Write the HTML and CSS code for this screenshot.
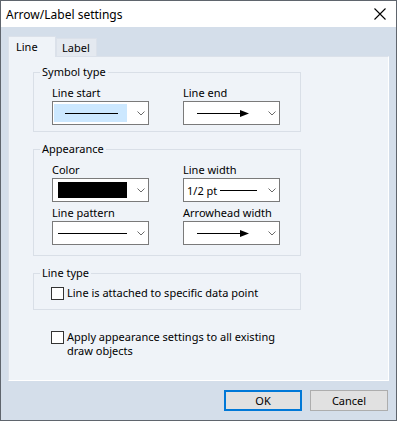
FILE: index.html
```html
<!DOCTYPE html>
<html lang="en">

<head>
	<meta charset="utf-8">
	<title>Arrow/Label settings</title>
	<link rel="stylesheet" href="styles.css">
</head>

<body>
	<div class="dialog">
		<div class="titlebar">
			<span class="title">Arrow/Label settings</span>
			<svg class="close" width="12" height="12" viewBox="0 0 12 12">
				<path d="M0.5 0.5 L11.5 11.5 M11.5 0.5 L0.5 11.5" stroke="#000" stroke-width="1.1" fill="none" />
			</svg>
		</div>

		<div class="main">
			<div class="tabs">
				<div class="tab active">Line</div>
				<div class="tab">Label</div>
			</div>

			<div class="panel">

				<fieldset class="group g-symbol">
					<legend>Symbol type</legend>
					<div class="grid">
						<div class="field">
							<div class="lbl">Line start</div>
							<div class="combo">
								<div class="value selected">
									<svg width="73" height="18"><line x1="11" y1="9.5" x2="64" y2="9.5" stroke="#000" /></svg>
								</div>
								<svg class="chev" width="8" height="5"><polyline points="0.5,0.5 4,4 7.5,0.5" fill="none" stroke="#6a6a6a" /></svg>
							</div>
						</div>
						<div class="field">
							<div class="lbl">Line end</div>
							<div class="combo">
								<div class="value">
									<svg width="73" height="18"><line x1="12" y1="9.5" x2="57" y2="9.5" stroke="#000" /><polygon points="55,6 64,9.5 55,13" fill="#000" /></svg>
								</div>
								<svg class="chev" width="8" height="5"><polyline points="0.5,0.5 4,4 7.5,0.5" fill="none" stroke="#6a6a6a" /></svg>
							</div>
						</div>
					</div>
				</fieldset>

				<fieldset class="group g-appearance">
					<legend>Appearance</legend>
					<div class="grid">
						<div class="field">
							<div class="lbl">Color</div>
							<div class="combo">
								<div class="value">
									<div class="swatch"></div>
								</div>
								<svg class="chev" width="8" height="5"><polyline points="0.5,0.5 4,4 7.5,0.5" fill="none" stroke="#6a6a6a" /></svg>
							</div>
						</div>
						<div class="field">
							<div class="lbl">Line width</div>
							<div class="combo">
								<div class="value">
									<span class="pt">1/2 pt</span>
									<svg width="38" height="18"><line x1="0" y1="9.5" x2="37" y2="9.5" stroke="#000" /></svg>
								</div>
								<svg class="chev" width="8" height="5"><polyline points="0.5,0.5 4,4 7.5,0.5" fill="none" stroke="#6a6a6a" /></svg>
							</div>
						</div>
						<div class="field">
							<div class="lbl">Line pattern</div>
							<div class="combo">
								<div class="value">
									<svg width="73" height="18"><line x1="4" y1="9.5" x2="74" y2="9.5" stroke="#000" /></svg>
								</div>
								<svg class="chev" width="8" height="5"><polyline points="0.5,0.5 4,4 7.5,0.5" fill="none" stroke="#6a6a6a" /></svg>
							</div>
						</div>
						<div class="field">
							<div class="lbl">Arrowhead width</div>
							<div class="combo">
								<div class="value">
									<svg width="73" height="18"><line x1="12" y1="9.5" x2="57" y2="9.5" stroke="#000" /><polygon points="55,6 64,9.5 55,13" fill="#000" /></svg>
								</div>
								<svg class="chev" width="8" height="5"><polyline points="0.5,0.5 4,4 7.5,0.5" fill="none" stroke="#6a6a6a" /></svg>
							</div>
						</div>
					</div>
				</fieldset>

				<fieldset class="group g-linetype">
					<legend>Line type</legend>
					<label class="check"><span class="box"></span><span>Line is attached to specific data point</span></label>
				</fieldset>

				<label class="check apply"><span class="box"></span><span>Apply appearance settings to all existing<br>draw objects</span></label>

			</div>

			<div class="buttons">
				<button class="btn default">OK</button>
				<button class="btn">Cancel</button>
			</div>
		</div>
	</div>
</body>

</html>
```

FILE: styles.css
```css
* {
	box-sizing: border-box;
}

body {
	margin: 0;
	font-family: "Noto Sans", sans-serif;
	font-size: 11px;
	color: #000;
}

.dialog {
	width: 397px;
	height: 421px;
	border: 1px solid #5f656d;
	display: flex;
	flex-direction: column;
}

/* Titelbar */

.titlebar {
	height: 26px;
	background: #fff;
	display: flex;
	align-items: center;
	justify-content: space-between;
	padding: 0 10px 0 5px;
}

.title {
	font-size: 12px;
}

.main {
	flex: 1;
	background: #d4deea;
	padding: 9px 7px 0;
}

/* Faner */

.tabs {
	display: flex;
	align-items: flex-end;
	height: 20px;
}

.tab {
	height: 18px;
	line-height: 17px;
	padding: 0 7px 0 5px;
	background: #e4e9f0;
	border: 1px solid #dbe1ea;
	border-bottom: none;
	width: 41px;
}

.tab.active {
	height: 21px;
	width: 48px;
	padding-left: 7px;
	line-height: 19px;
	background: #eff3f8;
	position: relative;
	z-index: 1;
	margin-bottom: -1px;
}

.panel {
	height: 325px;
	background: #eff3f8;
	border: 1px solid #dbe1ea;
	border-right-color: #fff;
	border-bottom-color: #fff;
	padding: 0 0 0 24px;
}

/* Grupper */

.group {
	width: 268px;
	margin: 8px 0 0;
	padding: 7px 0 6px 18px;
	border: 1px solid #d9dfe7;
	min-width: 0;
}

.group legend {
	padding: 0 2px;
	margin-left: -12px;
	line-height: 14px;
}

.g-appearance {
	margin-top: 10px;
	padding-bottom: 10px;
}

.g-linetype {
	margin-top: 10px;
	padding: 6px 0 9px 17px;
}

.g-linetype legend {
	margin-left: -11px;
}

.grid {
	display: grid;
	grid-template-columns: 97px 97px;
	column-gap: 34px;
	row-gap: 4px;
}

.lbl {
	line-height: 14px;
	margin-bottom: 1px;
	white-space: nowrap;
}

.combo {
	height: 24px;
	border: 1px solid #7a7a7a;
	background: #fff;
	display: flex;
	align-items: center;
	padding: 0 0 0 1px;
}

.combo .value {
	width: 73px;
	height: 18px;
	display: flex;
	align-items: center;
	margin-right: 10px;
	flex: none;
}

.combo .value svg {
	display: block;
}

.combo .selected {
	background: #cce8ff;
}

.chev {
	display: block;
	flex: none;
	margin-top: 1px;
}

.swatch {
	width: 70px;
	height: 16px;
	margin-left: 4px;
	background: #000;
}

.pt {
	padding-left: 2px;
	margin-right: 3px;
	white-space: nowrap;
}

/* Afkrydsningsfelter */

.check {
	display: flex;
	align-items: flex-start;
	gap: 3px;
	line-height: 14px;
}

.check .box {
	width: 13px;
	height: 13px;
	border: 1px solid #333;
	background: #fff;
	flex: none;
	margin-top: 1px;
}

.apply {
	margin: 20px 0 0 18px;
}

/* Knapper */

.buttons {
	display: flex;
	justify-content: flex-end;
	gap: 8px;
	margin-top: 9px;
	padding-right: 1px;
}

.btn {
	width: 78px;
	height: 21px;
	font-family: "Noto Sans", sans-serif;
	font-size: 11px;
	background: #e1e1e1;
	border: 1px solid #adadad;
	padding: 0;
	color: #000;
}

.btn.default {
	border: 2px solid #0078d7;
}
```
